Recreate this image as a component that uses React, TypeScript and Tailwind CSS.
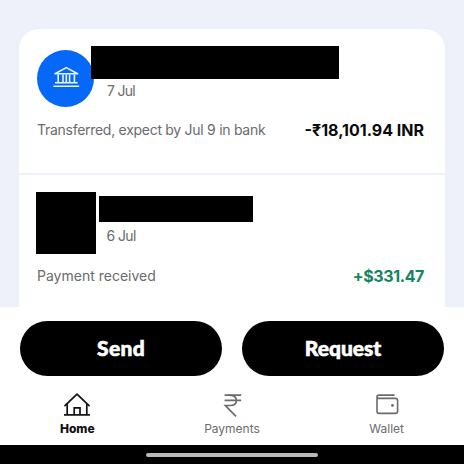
import type { ReactNode } from 'react';

function BankIcon() {
  return (
    <svg width="28" height="24" viewBox="0 0 28 24" fill="none" stroke="#e8f4ff" strokeWidth="1.6" className="-mt-[3px]">
      <path d="M3 8.8 14.3 2.6 25.6 8.8Z" strokeLinejoin="round" />
      <path d="M6.2 9.5V17.5M11 9.5V17.5M17.6 9.5V17.5M22.4 9.5V17.5M14.3 9.5V17.5" />
      <path d="M3 17.7H25.6M1.4 21.3H27.2" />
    </svg>
  );
}

function HomeIcon() {
  return (
    <svg width="28" height="26" viewBox="0 0 28 26" fill="none" stroke="currentColor" strokeWidth="1.7">
      <path d="M2 13.6 14 2.2 26 13.6" strokeLinecap="round" strokeLinejoin="round" />
      <path d="M4.2 12V22.9M23.8 12V22.9M11.2 22.9V15.8H17V22.9" />
      <path d="M1 22.9H27" />
    </svg>
  );
}

function RupeeIcon() {
  return (
    <svg width="28" height="26" viewBox="0 0 28 26" fill="none" stroke="currentColor" strokeWidth="1.7">
      <path d="M6.6 3.1H23.2M6.6 8.3H23.2" />
      <path d="M10.5 3.1C16 3.1 18.4 5.3 18.4 8.4C18.4 11.6 16 13.5 12 13.5H7.4L18 24.3" />
    </svg>
  );
}

function WalletIcon() {
  return (
    <svg width="28" height="26" viewBox="0 0 28 26" fill="none" stroke="currentColor" strokeWidth="1.6">
      <path d="M21.6 3.1H6Q4 3.1 4 5V19.2Q4 21.4 6 21.4H22.4Q24.6 21.4 24.6 19.2V8.6Q24.6 6.4 22.4 6.4H6Q4 6.4 4 4.8" strokeLinejoin="round" />
      <circle cx="19.5" cy="13.4" r="1.4" fill="currentColor" stroke="none" />
    </svg>
  );
}

function NavItem({ icon, children, className }: { icon: ReactNode; children: ReactNode; className: string }) {
  return (
    <div className={`flex flex-1 flex-col items-center gap-[2px] ${className}`}>
      {icon}
      <span className="text-[12px] leading-[18px]">{children}</span>
    </div>
  );
}

export default function App() {
  return (
    <div className="flex h-screen flex-col overflow-hidden bg-[#eef0fa] font-['Inter',sans-serif]">
      <main className="flex h-[307px] shrink-0 flex-col px-[19px] pt-[29px]">
        <div className="flex-1 rounded-t-[20px] bg-white">
          <section className="h-[146px] border-b-2 border-[#f0f2fa] px-[18px] pt-[17px]">
            <div className="flex h-[61px]">
              <div className="mt-1 flex size-[57px] shrink-0 items-center justify-center rounded-full bg-[#0668f9]">
                <BankIcon />
              </div>
              <div className="z-10 -ml-[3px]">
                <div className="h-[33px] w-[248px] bg-black" />
                <p className="ml-4 pt-[2px] text-[14px] leading-5 tracking-[-0.7px] text-[#6b6b6b]">7 Jul</p>
              </div>
            </div>
            <div className="mt-[13px] flex items-center justify-between pr-[3px]">
              <p className="text-[14px] leading-5 tracking-[-0.28px] whitespace-nowrap text-[#6b6b6b]">
                Transferred, expect by Jul 9 in bank
              </p>
              <p className="text-[16px] leading-5 font-bold whitespace-nowrap text-[#0a0a0a]">
                -₹18,101.94 INR
              </p>
            </div>
          </section>

          <section className="px-[18px] pt-[17px]">
            <div className="-ml-[1.5px] flex h-[63px] gap-[3px]">
              <div className="h-[62px] w-[60px] bg-black" />
              <div className="pt-[4px]">
                <div className="h-[26px] w-[154px] bg-black" />
                <p className="ml-2 pt-[4px] text-[14px] leading-5 tracking-[-0.6px] text-[#6b6b6b]">6 Jul</p>
              </div>
            </div>
            <div className="mt-[11px] flex items-center justify-between pr-[3px]">
              <p className="text-[14px] leading-5 text-[#6b6b6b]">Payment received</p>
              <p className="text-[16px] leading-5 font-bold tracking-[-0.4px] text-[#148560]">+$331.47</p>
            </div>
          </section>
        </div>
      </main>

      <footer className="flex h-[138px] shrink-0 flex-col bg-white">
        <div className="flex gap-5 px-5 pt-[14px] font-['Lato',sans-serif] text-[21px] font-black text-white [-webkit-text-stroke:0.6px_white]">
          <button className="h-[55px] flex-1 rounded-full bg-black pb-[2px] tracking-[0.3px]">Send</button>
          <button className="h-[55px] flex-1 rounded-full bg-black pb-[2px]">Request</button>
        </div>
        <nav className="flex pt-[16px]">
          <NavItem icon={<HomeIcon />} className="font-extrabold text-[#111111]">Home</NavItem>
          <NavItem icon={<RupeeIcon />} className="text-[#6b6b6b]">Payments</NavItem>
          <NavItem icon={<WalletIcon />} className="text-[#6b6b6b]">Wallet</NavItem>
        </nav>
      </footer>

      <div className="flex h-[19px] shrink-0 justify-center bg-black pt-[8px]">
        <div className="h-1 w-[172px] rounded-full bg-[#b8b8b8]" />
      </div>
    </div>
  );
}
